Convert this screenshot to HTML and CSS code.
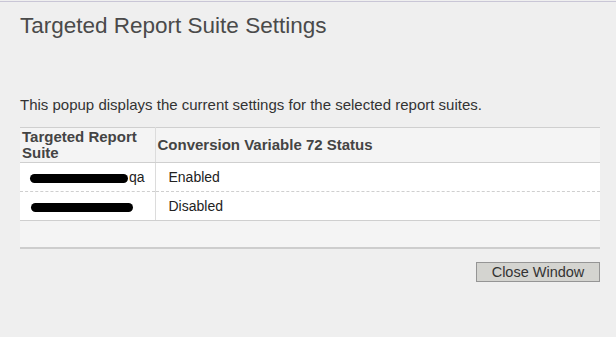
FILE: index.html
```html
<!DOCTYPE html>
<html lang="en">
<head>
    <meta charset="UTF-8">
    <title>Targeted Report Suite Settings</title>
    <link rel="stylesheet" href="styles.css">
</head>
<body>
    <div class="popup">
        <h1 class="popup-title">Targeted Report Suite Settings</h1>

        <p class="intro">This popup displays the current settings for the selected report suites.</p>

        <table class="settings">
            <colgroup>
                <col class="suite-col">
                <col>
            </colgroup>
            <thead>
                <tr>
                    <th class="col-suite">Targeted Report Suite</th>
                    <th>Conversion Variable 72 Status</th>
                </tr>
            </thead>
            <tbody>
                <tr>
                    <td class="col-suite"><span class="redacted redacted-short"></span>qa</td>
                    <td class="status">Enabled</td>
                </tr>
                <tr class="last">
                    <td class="col-suite"><span class="redacted redacted-long"></span></td>
                    <td class="status">Disabled</td>
                </tr>
            </tbody>
            <tfoot>
                <tr>
                    <td colspan="2"></td>
                </tr>
            </tfoot>
        </table>

        <div class="actions">
            <button class="close-btn" type="button">Close Window</button>
        </div>
    </div>
</body>
</html>
```

FILE: styles.css
```css
body {
    margin: 0;
    background-color: #efefef;
    font-family: "Liberation Sans", Arial, sans-serif;
    color: #333;
}

.popup {
    margin-top: 1px;
    border-top: 1px solid #c9c6d6;
    padding: 0 16px 0 20px;
    min-height: 334px;
}

.popup-title {
    margin: 0;
    padding-top: 11px;
    font-size: 22.5px;
    font-weight: normal;
    line-height: 26px;
    color: #4a4a4a;
}

.intro {
    margin: 57px 0 0 0;
    font-size: 15px;
    line-height: 18px;
    color: #333;
}

.settings {
    margin-top: 13px;
    width: 100%;
    table-layout: fixed;
    border-collapse: collapse;
    background-color: #f4f4f4;
    font-size: 14px;
}

.settings .suite-col {
    width: 135px;
}

.settings th {
    height: 34px;
    padding: 0 2px;
    text-align: left;
    font-size: 15px;
    font-weight: bold;
    line-height: 16px;
    color: #444;
    border-top: 1px solid #cfcfcf;
    border-bottom: 1px solid #cfcfcf;
}

.settings .col-suite {
    border-right: 1px solid #dcdcdc;
}

.settings tbody td {
    height: 28px;
    padding: 0;
    background-color: #fff;
    color: #222;
    border-bottom: 1px dashed #cfcfcf;
}

.settings tbody tr.last td {
    border-bottom: 1px solid #cfcfcf;
}

.settings tbody td.col-suite {
    padding-left: 10px;
    white-space: nowrap;
}

.settings td.status {
    padding-left: 13px;
}

.settings tfoot td {
    height: 26px;
    padding: 0;
    background-color: #f4f4f4;
    border-bottom: 2px solid #cdcdcd;
}

.redacted {
    display: inline-block;
    height: 9px;
    background-color: #000;
    border-radius: 5px;
    vertical-align: middle;
}

.redacted-short {
    width: 98px;
    margin-right: 1px;
}

.redacted-long {
    width: 102px;
    margin-left: 1px;
}

.actions {
    display: flex;
    justify-content: flex-end;
    margin-top: 13px;
}

.close-btn {
    width: 124px;
    height: 20px;
    padding: 0;
    font-family: "Liberation Sans", Arial, sans-serif;
    font-size: 14.5px;
    color: #333;
    background-color: #d4d4d0;
    border: 1px solid #959595;
    border-radius: 0;
}
```
